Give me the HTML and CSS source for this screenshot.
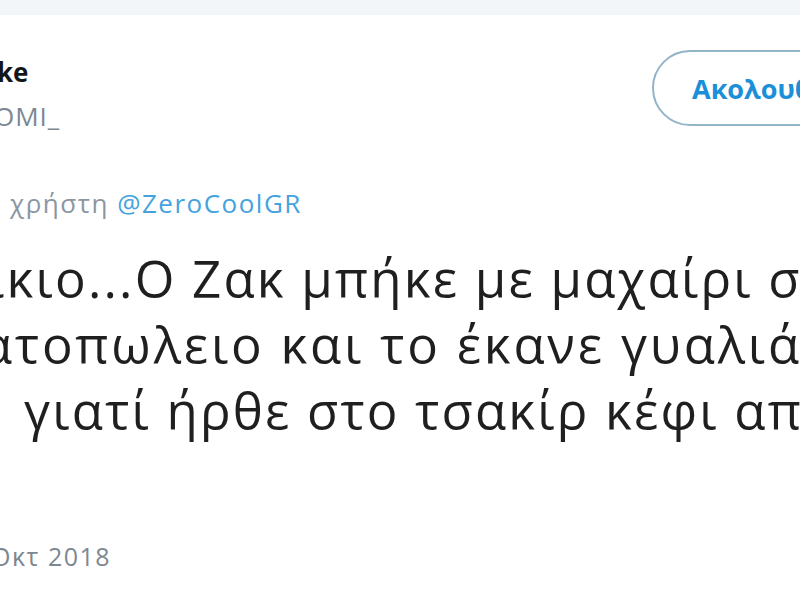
FILE: index.html
```html
<!DOCTYPE html>
<html lang="el">
<head>
    <meta charset="UTF-8">
    <meta name="viewport" content="width=device-width, initial-scale=1.0">
    <title>Tweet</title>
    <link rel="stylesheet" href="styles.css">
</head>
<body>
    <div class="topbar"></div>

    <div class="tweet">
        <div class="header">
            <div class="user">
                <div class="name">ke</div>
                <div class="handle">OMI_</div>
            </div>
            <button class="follow">Ακολουθήστε</button>
        </div>

        <div class="reply">χρήστη <span class="mention">@ZeroCoolGR</span></div>

        <div class="tweet-text">
            <div class="line line-1">ίκιο...Ο Ζακ μπήκε με μαχαίρι σε</div>
            <div class="line line-2">ατοπωλειο και το έκανε γυαλιά</div>
            <div class="line line-3">γιατί ήρθε στο τσακίρ κέφι από</div>
        </div>

        <div class="date">Οκτ 2018</div>
    </div>
</body>
</html>
```

FILE: styles.css
```css
html, body {
    margin: 0;
    padding: 0;
    overflow: hidden;
    background: #fff;
}
body {
    font-family: "Open Sans", "Noto Sans", sans-serif;
    color: #1c2022;
    width: 800px;
    height: 600px;
}
.topbar {
    height: 15px;
    background: #f3f6f8;
}
.header {
    display: grid;
    grid-template-columns: 652px max-content;
    align-items: start;
}
.user {
    margin-top: 42px;
    margin-left: -3px;
}
.name {
    font-size: 26px;
    line-height: 30px;
    font-weight: 700;
    color: #14171a;
}
.handle {
    margin-top: 14px;
    margin-left: -3px;
    font-size: 26px;
    line-height: 30px;
    letter-spacing: 1px;
    color: #7b8894;
}
.follow {
    margin-top: 35px;
    height: 76px;
    padding: 0 38px;
    border: 2px solid #94b4c9;
    border-radius: 38px;
    background: #fff;
    font-family: "Open Sans", sans-serif;
    font-size: 27px;
    font-weight: 700;
    color: #1b8fd8;
}
.reply {
    margin-top: 56px;
    margin-left: 10px;
    font-size: 26px;
    line-height: 32px;
    letter-spacing: 1.5px;
    color: #8a96a1;
}
.mention {
    color: #44a3de;
}
.tweet-text {
    margin-top: 26px;
    font-size: 51px;
    line-height: 66px;
    letter-spacing: 2.2px;
    white-space: nowrap;
    color: #1f1f1f;
}
.line-1 {
    margin-left: -13px;
}
.line-2 {
    margin-left: -19px;
    letter-spacing: 2.8px;
}
.line-3 {
    margin-left: 24px;
}
.date {
    margin-top: 98px;
    margin-left: -9px;
    font-size: 25px;
    line-height: 30px;
    letter-spacing: 1.5px;
    color: #7d8790;
}
```
